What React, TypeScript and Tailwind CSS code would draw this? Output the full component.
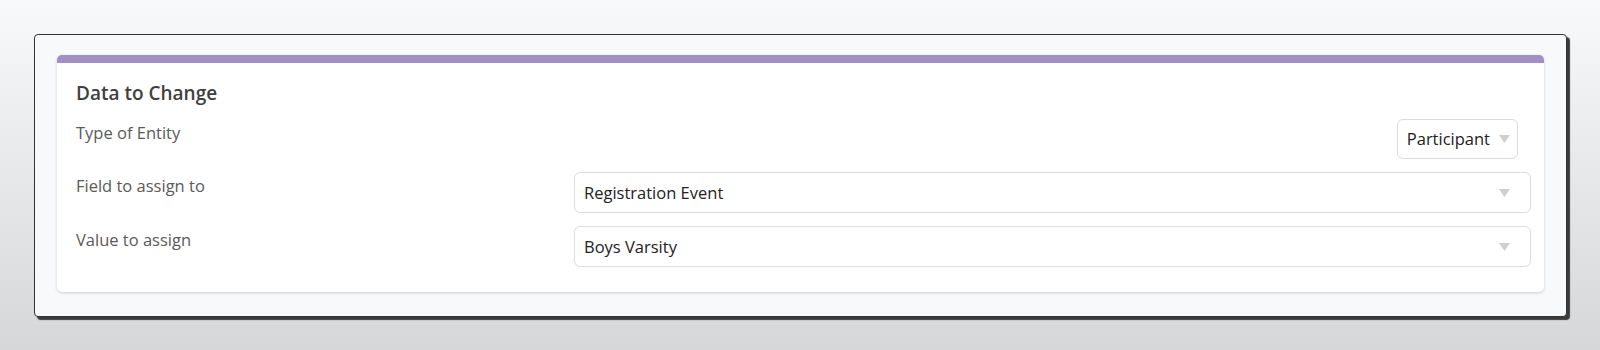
import { ReactNode } from 'react'

function Caret() {
  return (
    <svg width="11" height="8" viewBox="0 0 11 8" className="shrink-0">
      <path d="M0 0 H11 L5.5 8 Z" fill="#cfcfcf" />
    </svg>
  )
}

interface SelectBoxProps {
  value: string
  compact?: boolean
}

function SelectBox({ value, compact = false }: SelectBoxProps) {
  return (
    <div
      className={
        compact
          ? 'flex h-[40px] items-center gap-[9px] rounded-[6px] border border-[#dcdcdc] bg-white pl-[9px] pr-[7px]'
          : 'flex h-[41px] flex-1 items-center justify-between rounded-[6px] border border-[#dcdcdc] bg-white pl-[9px] pr-[20px]'
      }
    >
      <span className="text-[16.5px] leading-[22px] text-[#222]">{value}</span>
      <Caret />
    </div>
  )
}

function FieldRow({ label, children }: { label: string; children: ReactNode }) {
  return (
    <div className="flex items-start">
      <div className="w-[498px] shrink-0 pt-[3px] text-[16.5px] leading-[22px] text-[#5a5a5a]">{label}</div>
      {children}
    </div>
  )
}

export default function App() {
  return (
    <div
      className="h-[350px] w-[1600px] bg-gradient-to-b from-[#f8f9fa] to-[#d6d7d9] pl-[34px] pt-[34px]"
      style={{ fontFamily: '"Open Sans", "Noto Sans", sans-serif' }}
    >
      <div className="w-[1533px] rounded-[4px] border border-[#333] bg-[#f8f9fb] px-[22px] pb-[24px] pt-[20px] shadow-[3px_3px_1px_#3a3a3a]">
        <div className="rounded-[5px] border-t-[8px] border-[#a28fc4] bg-white px-[19px] pb-[25px] pt-[18px] pr-[13px] shadow-[0_1px_3px_rgba(0,0,0,0.18)]">
          <h2 className="mb-[14px] text-[19px] font-semibold leading-[24px] text-[#404040]">Data to Change</h2>
          <div className="flex flex-col gap-[13px]">
            <div className="flex items-start justify-between pr-[13px]">
              <div className="pt-[3px] text-[16.5px] leading-[22px] text-[#5a5a5a]">Type of Entity</div>
              <SelectBox value="Participant" compact />
            </div>
            <FieldRow label="Field to assign to">
              <SelectBox value="Registration Event" />
            </FieldRow>
            <FieldRow label="Value to assign">
              <SelectBox value="Boys Varsity" />
            </FieldRow>
          </div>
        </div>
      </div>
    </div>
  )
}
